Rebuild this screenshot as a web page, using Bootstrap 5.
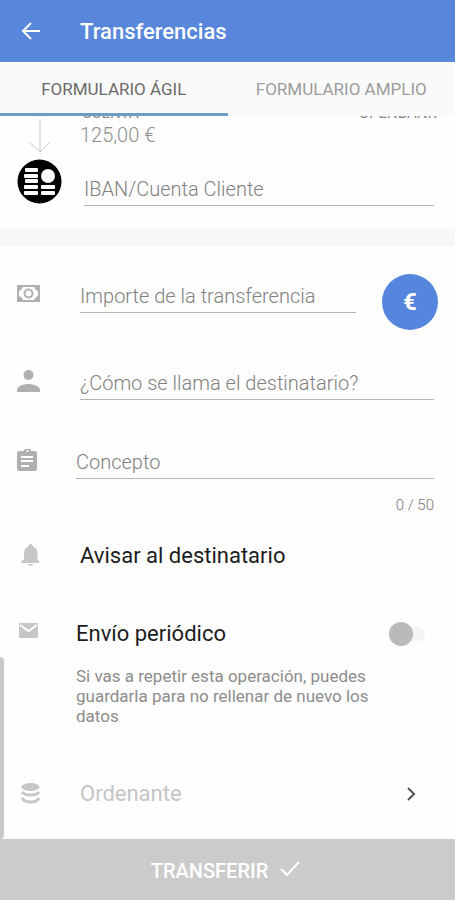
<!DOCTYPE html>
<html lang="es">
<head>
<meta charset="utf-8">
<meta name="viewport" content="width=device-width, initial-scale=1">
<title>Transferencias</title>
<link href="https://cdn.jsdelivr.net/npm/bootstrap@5.3.0/dist/css/bootstrap.min.css" rel="stylesheet">
<style>
body{font-family:Roboto,"Liberation Sans",sans-serif;background:#fefefe;color:#1c1c1c;line-height:24px}
svg{display:block}
.topbar{background:#5886db;height:62px;padding:2px 17px 0}
.back-btn{width:63px}
.topbar h1{font-size:22px;font-weight:500;line-height:28px}
.tabs{background:#fafafa;height:54px}
.tabs button{font-size:17px;font-weight:400;color:#9c9c9c;border-bottom:3px solid transparent;white-space:nowrap;padding:2px 0 0}
.tabs button.active{color:#6a6a6a;border-color:#6f9bc7}
.account{height:112px;overflow:hidden}
.account-head{height:3px;font-size:15px;line-height:12px;color:#888;padding:0 18px 0 82px}
.amount{font-size:20px;font-weight:300;color:#8f8f8f}
.band{height:18px;background:#f7f7f7}
.entry{display:grid;grid-template-columns:80px minmax(0,1fr);padding-right:21px}
.entry.near{grid-template-columns:76px minmax(0,1fr)}
.entry.far{grid-template-columns:84px minmax(0,1fr)}
.entry .glyph{padding-left:16px;color:#b0b0b0}
.entry .glyph.soft{padding-left:18px;color:#c6c6c6}
.line-input{height:34px;width:100%;border:0;border-bottom:1px solid #b4b4b4;border-radius:0;background:transparent;padding:0;font-size:20px;font-weight:300;color:#333;outline:0}
.line-input::placeholder{color:#808080;opacity:1}
.far .line-input{margin-top:14px}
.money{margin-top:28px}
.money .line-input{margin-top:5px}
.money .glyph{padding-top:7px}
.fab{width:56px;height:56px;margin:0 -4px 0 26px;background:#5585dc;color:#fff;font-size:24px;font-weight:700;line-height:56px}
.counter{font-size:15px;font-weight:300;line-height:20px;color:#777;padding-right:21px;margin-top:16px}
.title{font-size:22px;font-weight:400;line-height:24px}
.help{font-size:17px;font-weight:400;line-height:20px;color:#8c8c8c;max-width:310px;margin-top:20px}
.toggle{appearance:none;width:36px;height:14px;border-radius:7px;background:linear-gradient(90deg,#fefefe 50%,#f4f4f4 50%);margin:0 9px 0 0;position:relative}
.toggle::before{content:"";position:absolute;left:0;top:-5px;width:24px;height:24px;border-radius:50%;background:#bababa}
.toggle:checked::before{left:12px;background:#5585dc}
.gap-name{margin-top:36px}
.gap-note{margin-top:45px}
.gap-notify{margin-top:29px}
.gap-repeat{margin-top:54px}
.gap-source{margin-top:56px}
.source{color:#c5c5c5;font-size:22px}
.send{height:61px;background:#cbcbcb;color:#fff;font-size:20px;font-weight:500;padding-top:4px}
.edge-handle{position:absolute;left:0;bottom:0;width:4px;height:182px;background:#c9c9c6;border-radius:0 4px 4px 0}
</style>
</head>
<body>
<div class="d-flex flex-column min-vh-100">
<header class="topbar d-flex align-items-center text-white">
<button class="back-btn border-0 bg-transparent text-white p-0" type="button" aria-label="Volver">
<svg width="28" height="28" viewBox="0 0 28 28" fill="none" stroke="currentColor" stroke-width="2"><path d="M23 13H6M14 5l-8 8 8 8"/></svg></button>
<h1 class="mb-0">Transferencias</h1>
</header>
<nav class="tabs d-flex" role="tablist">
<button class="active flex-fill w-50 border-top-0 border-start-0 border-end-0 bg-transparent" type="button" role="tab" aria-selected="true">FORMULARIO ÁGIL</button>
<button class="flex-fill w-50 border-top-0 border-start-0 border-end-0 bg-transparent" type="button" role="tab" aria-selected="false">FORMULARIO AMPLIO</button>
</nav>
<main class="position-relative flex-grow-1">
<section class="account">
<div class="account-head d-flex justify-content-between align-items-end overflow-hidden"><span>CUENTA</span><span>OPENBANK</span></div>
<div class="entry">
<div class="glyph"><svg width="46" height="39" viewBox="0 0 46 39" fill="none" stroke="#c8c8c8" stroke-width="1"><path d="M24 0v33M13 23l11 10 10-10"/></svg></div>
<div class="amount pt-1">125,00 €</div>
</div>
<div class="entry far">
<div class="glyph"><svg width="46" height="46" viewBox="0 0 46 46"><circle cx="23.500" cy="23.500" r="22" fill="#000"/><g fill="#fff"><rect x="9" y="10" width="13" height="4" rx="1"/><rect x="8" y="16" width="14" height="4" rx="1"/><rect x="9" y="21" width="13" height="4" rx="1"/><rect x="8" y="27" width="14" height="4" rx="1"/><rect x="8" y="33" width="14" height="4" rx="1"/><circle cx="32" cy="18" r="7"/><rect x="25" y="27" width="14" height="4" rx="1"/><rect x="25" y="33" width="14" height="4" rx="1"/></g></svg></div>
<div><input class="line-input" type="text" aria-label="IBAN" placeholder="IBAN/Cuenta Cliente"></div>
</div>
</section>
<div class="band"></div>
<form id="transfer">
<div class="entry money">
<div class="glyph"><svg width="24" height="24" viewBox="0 0 24 24"><path fill="currentColor" fill-rule="evenodd" d="M1 4h23v17H1zM7 6h11q1 3 4 4v5q-3 1-4 4H7q-1-3-4-4v-5q3-1 4-4z"/><circle cx="12.500" cy="12.500" r="4" fill="none" stroke="currentColor" stroke-width="2"/></svg></div>
<div class="d-flex"><input class="line-input" type="text" aria-label="Importe" placeholder="Importe de la transferencia"><button class="fab flex-shrink-0 rounded-circle border-0 p-0" type="button">€</button></div>
</div>
<div class="entry gap-name">
<div class="glyph pt-1"><svg width="24" height="24" viewBox="0 0 24 24" fill="currentColor"><circle cx="12.500" cy="5" r="5"/><path d="M1 22v-2c0-4 7-6 11.500-6S24 16 24 20v2z"/></svg></div>
<input class="line-input" type="text" aria-label="Destinatario" placeholder="¿Cómo se llama el destinatario?">
</div>
<div class="entry near gap-note">
<div class="glyph pt-1"><svg width="24" height="24" viewBox="0 0 24 24"><path fill="currentColor" fill-rule="evenodd" d="M3 2h5a3.500 3.500 0 0 1 7 0h4q2 0 2 2v16q0 2-2 2H3q-2 0-2-2V4q0-2 2-2zm8.500-1a1 1 0 1 0 0 2 1 1 0 0 0 0-2zM5 7v2h12V7zm0 4v2h12v-2zm0 5v2h8v-2z"/></svg></div>
<input class="line-input" type="text" maxlength="50" aria-label="Concepto" placeholder="Concepto">
</div>
<div class="counter text-end">0 / 50</div>
<div class="entry gap-notify">
<div class="glyph soft"><svg width="24" height="24" viewBox="0 0 24 24" fill="currentColor"><path d="M10.500 2.500V2q0-2 2-2t2 2v.5c4 1 5 4 5 7V15l2 3v1H3v-1l3-3V9.500c0-3 1-6 4.500-7zM10 20h5q0 2-2.500 2T10 20z"/></svg></div>
<div class="title">Avisar al destinatario</div>
</div>
<div class="entry near gap-repeat">
<div class="glyph soft"><svg width="20" height="16" viewBox="0 0 20 16"><rect x="1" y="1" width="19" height="15" rx="1" fill="currentColor"/><path d="M2 3l8.500 6L19 3" fill="none" stroke="#fefefe" stroke-width="2"/></svg></div>
<div>
<div class="d-flex justify-content-between align-items-center"><label class="title" for="repeat">Envío periódico</label><input class="toggle" id="repeat" type="checkbox" role="switch"></div>
<p class="help mb-0">Si vas a repetir esta operación, puedes guardarla para no rellenar de nuevo los datos</p>
</div>
</div>
<div class="entry gap-source">
<div class="glyph soft"><svg width="24" height="24" viewBox="0 0 24 24"><ellipse cx="12.500" cy="5" rx="9" ry="4" fill="currentColor"/><path d="M4 10q2 3 8.500 3T21 10M4 16q2 4 8.500 4T21 16" fill="none" stroke="currentColor" stroke-width="3"/></svg></div>
<button class="source d-flex justify-content-between align-items-center border-0 bg-transparent p-0" type="button"><span>Ordenante</span><svg class="me-3" width="16" height="20" viewBox="0 0 16 20" fill="none" stroke="#555" stroke-width="2"><path d="M6 4l6 6-6 6"/></svg></button>
</div>
</form>
<div class="edge-handle"></div>
</main>
<button class="send w-100 border-0 d-flex justify-content-center align-items-center gap-2" type="submit" form="transfer">TRANSFERIR<svg width="28" height="24" viewBox="0 0 28 24" fill="none" stroke="currentColor" stroke-width="2"><path d="M5 10l6 6L23 3"/></svg></button>
</div>
<script src="https://cdn.jsdelivr.net/npm/bootstrap@5.3.0/dist/js/bootstrap.bundle.min.js"></script>
</body>
</html>
